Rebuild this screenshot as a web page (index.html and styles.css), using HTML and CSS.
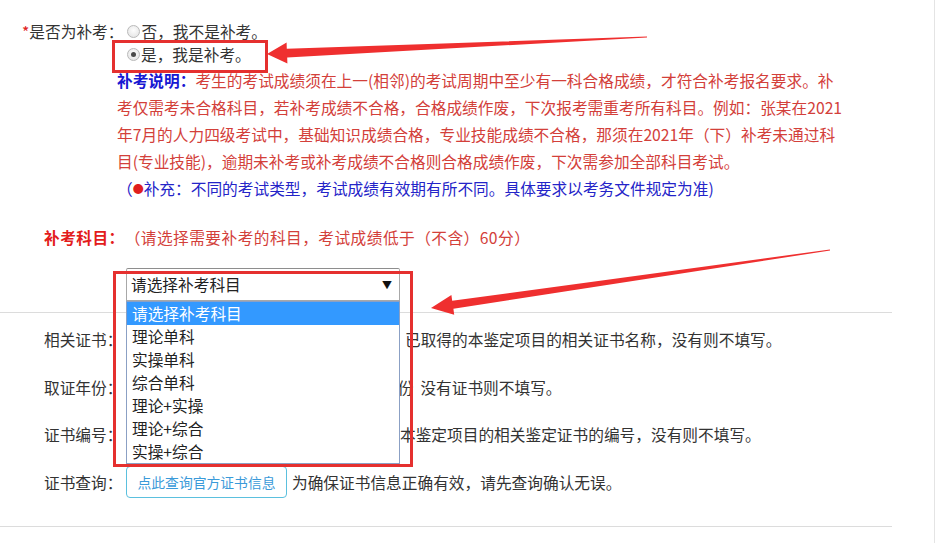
FILE: index.html
```html
<!DOCTYPE html>
<html lang="zh-CN">
<head>
  <meta charset="UTF-8">
  <title>补考报名</title>
  <link rel="stylesheet" href="styles.css">
</head>
<body>

<div class="page">
  <div class="q-row">
    <span class="req">*</span>是否为补考：<label class="radio"><i class="rb"></i>否，我不是补考。</label>
  </div>
  <div class="q-opt">
    <label class="radio"><i class="rb on"></i>是，我是补考。</label>
  </div>

  <p class="note"><b class="note-title">补考说明：</b>考生的考试成绩须在上一(相邻)的考试周期中至少有一科合格成绩，才符合补考报名要求。补<br>考仅需考未合格科目，若补考成绩不合格，合格成绩作废，下次报考需重考所有科目。例如：张某在2021<br>年7月的人力四级考试中，基础知识成绩合格，专业技能成绩不合格，那须在2021年（下）补考未通过科<br>目(专业技能)，逾期未补考或补考成绩不合格则合格成绩作废，下次需参加全部科目考试。</p>
  <p class="extra">（<span class="dot">●</span>补充：不同的考试类型，考试成绩有效期有所不同。具体要求以考务文件规定为准)</p>

  <div class="subject"><b>补考科目：</b>（请选择需要补考的科目，考试成绩低于（不含）60分）</div>

  <div class="select-wrap">
    <select class="select">
      <option>请选择补考科目</option>
    </select>
    <ul class="dropdown">
      <li class="active">请选择补考科目</li>
      <li>理论单科</li>
      <li>实操单科</li>
      <li>综合单科</li>
      <li>理论+实操</li>
      <li>理论+综合</li>
      <li>实操+综合</li>
    </ul>
  </div>

  <hr class="line">

  <div class="field first">
    <span class="lbl">相关证书：</span>
    <input class="inp" type="text">
    <span class="hint hint-cert">已取得的本鉴定项目的相关证书名称，没有则不填写。</span>
  </div>
  <div class="field">
    <span class="lbl">取证年份：</span>
    <input class="inp inp-year" type="text">
    <span class="hint hint-year">年份</span>
    <span class="hint hint-tip">没有证书则不填写。</span>
  </div>
  <div class="field">
    <span class="lbl">证书编号：</span>
    <input class="inp inp-no" type="text">
    <span class="hint">本鉴定项目的相关鉴定证书的编号，没有则不填写。</span>
  </div>
  <div class="field">
    <span class="lbl">证书查询：</span>
    <button class="btn" type="button">点此查询官方证书信息</button>
    <span class="hint hint-query">为确保证书信息正确有效，请先查询确认无误。</span>
  </div>

  <hr class="line line-bottom">

  <!-- annotation marks -->
  <div class="mark mark-radio"></div>
  <div class="mark mark-select"></div>
  <svg class="arrows" width="950" height="543" viewBox="0 0 950 543">
    <polygon points="267,54 286.6,42.6 286.8,48.8 647,36.5 647,37.5 287.2,57.4 287.4,63.6" />
    <polygon points="431,308 451.4,294.9 452.2,300.8 829.9,249.5 830.1,250.5 453.4,308.8 454.2,314.7" />
  </svg>
</div>

</body>
</html>
```

FILE: styles.css
```css
body {
  margin: 0;
  font-family: "Noto Sans CJK SC", "Liberation Sans", sans-serif;
  font-size: 15.7px;
  color: #333;
  background: #fff;
  text-spacing-trim: space-all;
}
.page {
  position: relative;
  width: 934px;
  height: 543px;
  border-right: 1px solid #e4e4e4;
  overflow: hidden;
}
.q-row {
  display: flex;
  align-items: center;
  padding: 20px 0 0 22px;
  line-height: 23px;
}
.req {
  color: #e02222;
}
.radio {
  display: inline-flex;
  align-items: center;
  margin-left: 4px;
}
.rb {
  position: relative;
  width: 13px;
  height: 13px;
  margin-right: 1px;
  box-sizing: border-box;
  border: 1px solid #b9b9b9;
  border-radius: 50%;
  background: radial-gradient(circle at 50% 40%, #fdfdfd, #e0e0e0);
}
.rb.on::after {
  content: "";
  position: absolute;
  left: 3px;
  top: 3px;
  width: 5px;
  height: 5px;
  border-radius: 50%;
  background: #4a4a4a;
}
.q-opt {
  display: flex;
  padding-left: 123px;
  line-height: 23px;
}
.note {
  margin: 1px 0 0 117px;
  width: 780px;
  line-height: 27px;
  color: #d3403a;
}
.note-title {
  color: #1818d2;
}
.extra {
  margin: 0 0 0 117px;
  line-height: 27px;
  color: #2424c8;
}
.dot {
  color: #e01e1e;
  font-size: 11px;
  vertical-align: 2px;
}
.subject {
  margin: 24px 0 0 44px;
  line-height: 23px;
  color: #d3403a;
  letter-spacing: 0.45px;
}
.subject b {
  color: #e31c1c;
}
.select-wrap {
  position: relative;
  width: 274px;
  margin: 18.5px 0 0 126px;
}
.select {
  display: block;
  width: 274px;
  height: 33px;
  padding: 0 4px;
  box-sizing: border-box;
  border: 1px solid #a8a8a8;
  border-top-color: #8e8e8e;
  border-radius: 2px 2px 0 0;
  background: #fff;
  color: #222;
  font: inherit;
  appearance: none;
  -webkit-appearance: none;
}
.select-wrap::after {
  content: "▼";
  position: absolute;
  right: 8px;
  top: 9px;
  font-size: 10px;
  color: #111;
}
.dropdown {
  position: absolute;
  top: 33px;
  left: 0;
  z-index: 2;
  width: 274px;
  margin: 0;
  padding: 0;
  box-sizing: border-box;
  border: 1px solid #8ba0c4;
  background: #fff;
  list-style: none;
  color: #222;
}
.dropdown li {
  height: 23px;
  line-height: 23px;
  padding-left: 5px;
}
.dropdown li.active {
  background: #3399ff;
  color: #fff;
}
.line {
  width: 892px;
  height: 0;
  margin: 11px 0 0 0;
  border: 0;
  border-top: 1px solid #dcdcdc;
}
.line-bottom {
  margin-top: 28px;
}
.field {
  display: flex;
  align-items: center;
  height: 32px;
  margin: 15.5px 0 0 44px;
}
.field.first {
  margin-top: 11px;
}
.lbl {
  width: 82px;
}
.inp {
  width: 274px;
  height: 30px;
  box-sizing: border-box;
  border: 1px solid #ccc;
}
.inp-year {
  width: 254px;
}
.inp-no {
  width: 270px;
}
.hint {
  margin-left: 4px;
}
.hint-cert {
  margin-left: 5px;
}
.hint-year {
  margin-left: 2px;
}
.hint-tip {
  margin-left: 7px;
}
.btn {
  width: 161px;
  height: 32px;
  border: 1px solid #5bc0de;
  border-radius: 4px;
  background: #fff;
  color: #3a9ad9;
  font-family: inherit;
  font-size: 13.8px;
}
.hint-query {
  margin-left: 5px;
}
.mark {
  position: absolute;
  z-index: 3;
  box-sizing: border-box;
  border: 3px solid #e5302f;
}
.mark-radio {
  left: 112px;
  top: 40px;
  width: 156px;
  height: 33px;
}
.mark-select {
  left: 113px;
  top: 271px;
  width: 300px;
  height: 196px;
}
.arrows {
  position: absolute;
  left: 0;
  top: 0;
  z-index: 3;
  fill: #ef2f2f;
  pointer-events: none;
}
```
